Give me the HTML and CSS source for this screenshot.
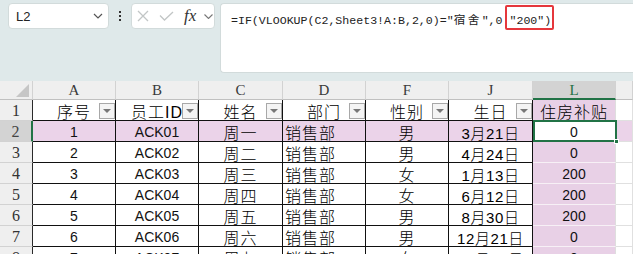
FILE: index.html
```html
<!DOCTYPE html>
<html lang="zh">
<head>
<meta charset="utf-8">
<link rel="stylesheet" href="styles.css">
</head>
<body>
<div class="toolbar">
  <div class="namebox">
    <span class="ref">L2</span>
    <svg class="chev" width="10" height="6" viewBox="0 0 10 6"><path d="M1 1 L5 5 L9 1" fill="none" stroke="#555" stroke-width="1.2"/></svg>
  </div>
  <div class="dots"><i></i><i></i><i></i></div>
  <div class="fxbox">
    <svg class="xicon" width="12" height="12" viewBox="0 0 12 12"><path d="M1 1 L11 11 M11 1 L1 11" stroke="#c2c6c6" stroke-width="1.3" fill="none"/></svg>
    <svg class="check" width="15" height="10" viewBox="0 0 15 10"><path d="M1 4.5 L5.5 9 L14 1" stroke="#c2c6c6" stroke-width="1.3" fill="none"/></svg>
    <span class="fx">fx</span>
    <svg class="chev2" width="9" height="5" viewBox="0 0 9 5"><path d="M0.5 0.5 L4.5 4.5 L8.5 0.5" fill="none" stroke="#777" stroke-width="1.1"/></svg>
  </div>
  <div class="formula"><span class="ftext">=IF(VLOOKUP(C2,Sheet3!A:B,2,0)="<span class="cj">宿舍</span>",0 <span class="hl">"200")</span></span></div>
</div>

<div class="sheet">
  <div class="h corner"><svg width="13" height="13" viewBox="0 0 13 13"><polygon points="13,0 13,13 0,13" fill="#c6c6c6"/></svg></div>
  <div class="h">A</div>
  <div class="h">B</div>
  <div class="h">C</div>
  <div class="h">D</div>
  <div class="h">F</div>
  <div class="h">J</div>
  <div class="h sel">L</div>
  <div class="h"></div>

  <div class="rh">1</div>
  <div class="c cj16">序号<span class="dd"><i></i></span></div>
  <div class="c cj16">员工ID<span class="dd"><i></i></span></div>
  <div class="c cj16">姓名<span class="dd"><i></i></span></div>
  <div class="c cj16">部门<span class="dd"><i></i></span></div>
  <div class="c cj16">性别<span class="dd"><i></i></span></div>
  <div class="c cj16">生日<span class="dd"><i></i></span></div>
  <div class="c cj16 lc">住房补贴</div>
  <div class="c e"></div>

  <div class="rh sel">2</div>
  <div class="c pk">1</div>
  <div class="c pk">ACK01</div>
  <div class="c pk cj16">周一</div>
  <div class="c pk cj16 left">销售部</div>
  <div class="c pk cj16">男</div>
  <div class="c pk dt">3月21日</div>
  <div class="c cur">0</div>
  <div class="c e pk2"></div>

  <div class="rh">3</div>
  <div class="c">2</div>
  <div class="c">ACK02</div>
  <div class="c cj16">周二</div>
  <div class="c cj16 left">销售部</div>
  <div class="c cj16">男</div>
  <div class="c dt">4月24日</div>
  <div class="c lc">0</div>
  <div class="c e"></div>

  <div class="rh">4</div>
  <div class="c">3</div>
  <div class="c">ACK03</div>
  <div class="c cj16">周三</div>
  <div class="c cj16 left">销售部</div>
  <div class="c cj16">女</div>
  <div class="c dt">1月13日</div>
  <div class="c lc">200</div>
  <div class="c e"></div>

  <div class="rh">5</div>
  <div class="c">4</div>
  <div class="c">ACK04</div>
  <div class="c cj16">周四</div>
  <div class="c cj16 left">销售部</div>
  <div class="c cj16">女</div>
  <div class="c dt">6月12日</div>
  <div class="c lc">200</div>
  <div class="c e"></div>

  <div class="rh">6</div>
  <div class="c">5</div>
  <div class="c">ACK05</div>
  <div class="c cj16">周五</div>
  <div class="c cj16 left">销售部</div>
  <div class="c cj16">男</div>
  <div class="c dt">8月30日</div>
  <div class="c lc">200</div>
  <div class="c e"></div>

  <div class="rh">7</div>
  <div class="c">6</div>
  <div class="c">ACK06</div>
  <div class="c cj16">周六</div>
  <div class="c cj16 left">销售部</div>
  <div class="c cj16">男</div>
  <div class="c dt">12月21日</div>
  <div class="c lc">0</div>
  <div class="c e"></div>

  <div class="rh">8</div>
  <div class="c">7</div>
  <div class="c">ACK07</div>
  <div class="c cj16">周七</div>
  <div class="c cj16 left">销售部</div>
  <div class="c cj16">女</div>
  <div class="c dt">12月18日</div>
  <div class="c lc">0</div>
  <div class="c e"></div>
</div>
</body>
</html>
```

FILE: styles.css
```css
html, body {
  margin: 0;
  padding: 0;
}
body {
  width: 633px;
  height: 254px;
  overflow: hidden;
  background: #dfe9ea;
  font-family: "Liberation Sans", "Noto Sans CJK SC", sans-serif;
  color: #1a1a1a;
}

.toolbar {
  height: 81px;
  box-sizing: border-box;
  padding: 3px 0 0 8px;
  display: flex;
  align-items: flex-start;
}

.namebox {
  width: 101px;
  height: 26px;
  box-sizing: border-box;
  background: #fff;
  border: 1px solid #d2dbdb;
  border-radius: 4px;
  display: flex;
  align-items: center;
  justify-content: space-between;
  padding: 0 5px 0 7px;
}
.ref {
  font-size: 13px;
  color: #222;
}

.dots {
  width: 2px;
  margin: 8px 10px 0 10px;
  display: flex;
  flex-direction: column;
  gap: 2px;
}
.dots i {
  display: block;
  width: 2px;
  height: 2px;
  background: #333;
}

.fxbox {
  width: 84px;
  height: 26px;
  box-sizing: border-box;
  background: #fff;
  border: 1px solid #d2dbdb;
  border-radius: 4px;
  display: flex;
  align-items: center;
  padding-left: 5px;
}
.check {
  margin-left: 10px;
}
.fx {
  margin-left: 10px;
  font-family: "Liberation Serif", serif;
  font-style: italic;
  font-size: 17px;
  color: #333;
  width: 15px;
  line-height: 1;
  margin-top: -2px;
}
.chev2 {
  margin-left: 5px;
}

.formula {
  flex: 1;
  margin-left: 5px;
  height: 70px;
  box-sizing: border-box;
  background: #fff;
  border: 1px solid #d2dbdb;
  border-right: none;
  border-radius: 4px 0 0 4px;
  padding: 6px 0 0 10px;
}
.ftext {
  font-family: "Liberation Mono", "Noto Sans CJK SC", monospace;
  font-size: 11.6px;
  line-height: 16px;
  color: #222;
  white-space: nowrap;
}
.ftext .cj {
  letter-spacing: 2.4px;
}
.hl {
  position: relative;
  display: inline-block;
}
.hl::after {
  content: "";
  position: absolute;
  left: -4px;
  right: -3px;
  top: -8px;
  bottom: -1px;
  border: 2px solid #e5373c;
  border-radius: 2px;
}

.sheet {
  display: grid;
  grid-template-columns: 33px 83px 83px 84px 83px 83px 84px 83px 17px;
  grid-template-rows: 19px repeat(8, 21px);
  background: #fff;
}

.h {
  box-sizing: border-box;
  background: #efefef;
  border-right: 1px solid #d2d2d2;
  border-bottom: 1px solid #c0c0c0;
  font-family: "Liberation Serif", serif;
  font-size: 15px;
  color: #3a3a3a;
  display: flex;
  align-items: center;
  justify-content: center;
  padding-top: 1px;
}
.h.sel {
  background: #d3d3d3;
  color: #1e7145;
  border-bottom: 2px solid #217346;
}
.h.corner {
  justify-content: flex-end;
  align-items: flex-end;
  padding: 0 3px 2px 0;
}
.h.corner svg {
  display: block;
}

.rh {
  box-sizing: border-box;
  background: #efefef;
  border-right: 1px solid #2a2a2a;
  border-bottom: 1px solid #d2d2d2;
  font-family: "Liberation Serif", serif;
  font-size: 16px;
  color: #333;
  display: flex;
  align-items: center;
  justify-content: center;
  padding-top: 2px;
}
.rh.sel {
  background: #d3d3d3;
  color: #444;
  border-right: 2px solid #217346;
}

.c {
  position: relative;
  box-sizing: border-box;
  border-right: 1px solid #111;
  border-bottom: 1px solid #111;
  display: flex;
  align-items: center;
  justify-content: center;
  font-size: 14px;
  color: #111;
  padding-top: 2px;
  white-space: nowrap;
  overflow: hidden;
}
.c.cj16 {
  font-size: 16px;
  letter-spacing: 1px;
  font-weight: 300;
  color: #000;
}
.c.dt {
  font-size: 15px;
  letter-spacing: 0.6px;
  font-weight: 300;
  color: #000;
}
.c.left {
  justify-content: flex-start;
  padding-left: 2px;
}
.c.pk {
  background: #ebd3e9;
}
.c.lc {
  background: #e8d0e6;
  border-right: 1px solid #dedede;
  border-bottom: 1px solid #f7f0f6;
}
.c.e {
  border-right: 1px solid #e0e0e0;
  border-bottom: 1px solid #e0e0e0;
}
.c.pk2 {
  background: #ebd3e9;
}
.c.cur {
  background: #fff;
  border-right: 1px solid #dedede;
  border-bottom: 1px solid #f7f0f6;
  overflow: visible;
  z-index: 2;
}
.c.cur::after {
  content: "";
  position: absolute;
  left: 0;
  top: -1px;
  right: -2px;
  bottom: -1px;
  border: 2px solid #217346;
}
.c.cur::before {
  content: "";
  position: absolute;
  right: -4px;
  bottom: -3px;
  width: 5px;
  height: 5px;
  background: #217346;
  border: 1px solid #fff;
  box-sizing: border-box;
  z-index: 1;
}

.dd {
  position: absolute;
  right: 0;
  bottom: 1px;
  width: 16px;
  height: 16px;
  box-sizing: border-box;
  background: #f4f4f4;
  border: 1px solid #a8a8a8;
  display: flex;
  align-items: center;
  justify-content: center;
}
.dd i {
  display: block;
  width: 0;
  height: 0;
  border-left: 4px solid transparent;
  border-right: 4px solid transparent;
  border-top: 4px solid #777;
}
```
